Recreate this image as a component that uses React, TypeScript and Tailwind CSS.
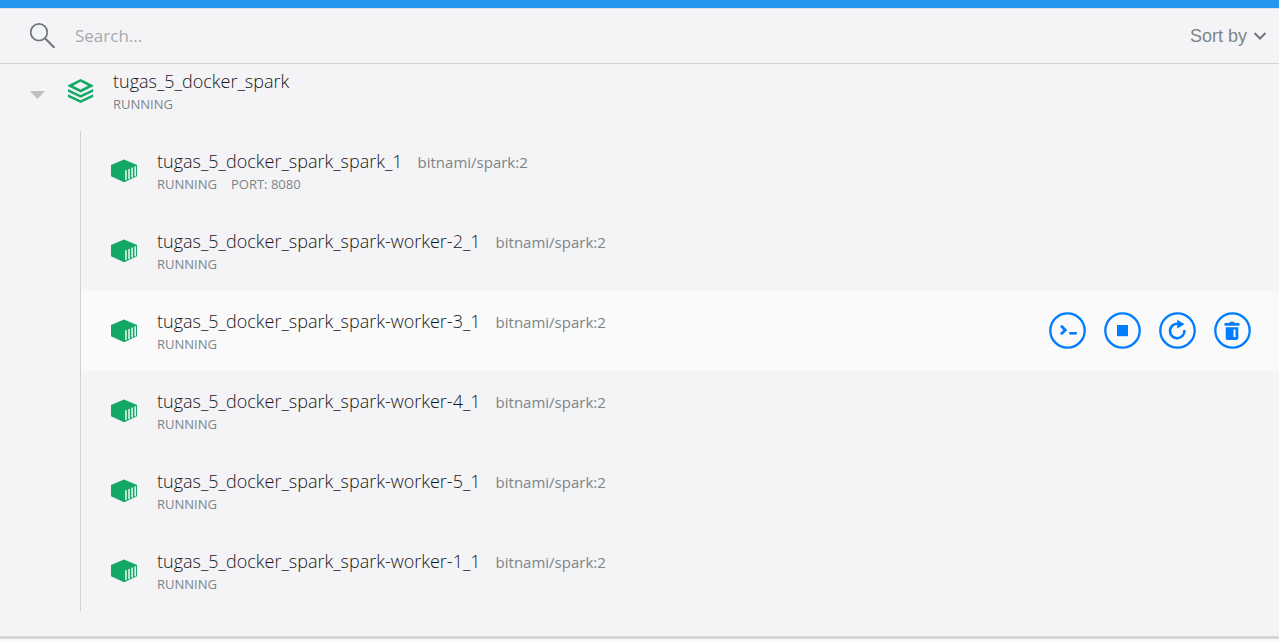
import type { ReactNode } from 'react';

type Container = { name: string; image: string; port?: number; active?: boolean };

const containers: Container[] = [
  { name: 'tugas_5_docker_spark_spark_1', image: 'bitnami/spark:2', port: 8080 },
  { name: 'tugas_5_docker_spark_spark-worker-2_1', image: 'bitnami/spark:2' },
  { name: 'tugas_5_docker_spark_spark-worker-3_1', image: 'bitnami/spark:2', active: true },
  { name: 'tugas_5_docker_spark_spark-worker-4_1', image: 'bitnami/spark:2' },
  { name: 'tugas_5_docker_spark_spark-worker-5_1', image: 'bitnami/spark:2' },
  { name: 'tugas_5_docker_spark_spark-worker-1_1', image: 'bitnami/spark:2' },
];

function SearchIcon() {
  return (
    <svg className="size-[26px]" viewBox="0 0 26 26" fill="none" stroke="#6d767b" aria-hidden="true">
      <circle cx="9" cy="9.2" r="8.3" strokeWidth="1.7" />
      <path d="M15 15.2 24.4 24.8" strokeWidth="2" />
    </svg>
  );
}

function StackIcon() {
  return (
    <svg className="h-6 w-[26px] shrink-0" viewBox="0 0 26 24" fill="#13a866" aria-hidden="true">
      <path fillRule="evenodd" d="M12.6 0 25.2 6.3V7.3L12.6 13.5 0 7.3V6.3ZM12.6 2.8 5.2 6.8 12.6 10.6 20 6.8Z" />
      <path d="M0 10.1 12.6 16 25.2 10.1V12.8L12.6 18.7 0 12.8Z" />
      <path d="M0 15.3 12.6 21.2 25.2 15.3V18L12.6 23.9 0 18Z" />
    </svg>
  );
}

function ContainerIcon() {
  return (
    <svg className="h-6 w-[26px] shrink-0" viewBox="0 0 26 24" aria-hidden="true">
      <path d="M13 .6 26 6V17.3L13 23.2 0 17.3V6Z" fill="#13a866" />
      <path d="M14.9 11.2V21M18 9.9V19.9M21.1 8.6V18.6M24.2 7.3V17.2" stroke="#f4f5f6" strokeWidth="1.5" />
    </svg>
  );
}

function ActionButton({ label, children }: { label: string; children: ReactNode }) {
  return (
    <button type="button" aria-label={label} className="size-[37px] text-[#007cff]">
      <svg viewBox="0 0 37 37" fill="none" className="size-full" aria-hidden="true">
        <circle cx="18.5" cy="18.5" r="17.2" stroke="currentColor" strokeWidth="2.3" />
        {children}
      </svg>
    </button>
  );
}

function Actions() {
  return (
    <div className="flex gap-[18px] pr-7 pb-px">
      <ActionButton label="Open terminal">
        <path d="M12 13.8 16.3 18 12 22.2" stroke="currentColor" strokeWidth="2.8" />
        <path d="M20.3 20H27.8V22.6H20.3Z" fill="currentColor" />
      </ActionButton>
      <ActionButton label="Stop">
        <path d="M13 13H24V24.2H13Z" fill="currentColor" />
      </ActionButton>
      <ActionButton label="Restart">
        <path d="M25.3 18A7.2 7.2 0 1 1 18.2 11.8H19" stroke="currentColor" strokeWidth="2.6" />
        <path d="M18.2 7.8 25.5 12.2 18.2 16.6Z" fill="currentColor" />
      </ActionButton>
      <ActionButton label="Delete">
        <path d="M10.5 11H15.3L16.1 9.8H19.9L20.7 11H25.5V13.8H10.5Z" fill="currentColor" />
        <path
          fillRule="evenodd"
          d="M11.7 15.3H24.3V26.2Q24.3 28 22.5 28H13.5Q11.7 28 11.7 26.2ZM19.5 17.5V25H21.5V17.5Z"
          fill="currentColor"
        />
      </ActionButton>
    </div>
  );
}

function ContainerRow({ name, image, port, active }: Container) {
  return (
    <li className={`flex h-20 items-center pl-[30px] ${active ? 'bg-[#fafafa]' : ''}`}>
      <ContainerIcon />
      <div className="ml-5 grow">
        <h2 className="flex items-baseline gap-[15px] text-lg leading-6 font-light text-[#14171a]">
          {name}
          <span className="text-[15px] font-normal text-[#7b8589]">{image}</span>
        </h2>
        <p className="flex gap-[14px] text-[13px] leading-5 text-[#7b8589]">
          <span>RUNNING</span>
          {port && <span>PORT: {port}</span>}
        </p>
      </div>
      {active && <Actions />}
    </li>
  );
}

export default function App() {
  return (
    <div className="flex min-h-screen flex-col bg-[#fafafa] font-['Open_Sans',sans-serif]">
      <div className="h-2 bg-[#2496ed]" />
      <header className="flex h-14 items-center border-t border-b border-t-[#dde1e5] border-b-[#d4d5d7] bg-[#f4f4f6] pr-3 pl-[30px]">
        <label htmlFor="search" aria-label="Search">
          <SearchIcon />
        </label>
        <input
          id="search"
          type="text"
          placeholder="Search..."
          className="ml-[19px] min-w-0 grow bg-transparent text-[17px] outline-none placeholder:text-[#a6aaad]"
        />
        <button type="button" className="flex items-center gap-[6px] pb-px font-['Liberation_Sans',sans-serif] text-lg leading-6 text-[#7b8589]">
          Sort by
          <svg className="h-2 w-[14px]" viewBox="0 0 14 8" fill="none" aria-hidden="true">
            <path d="M1.5 1 7 6.5 12.5 1" stroke="#6d767b" strokeWidth="2" />
          </svg>
        </button>
      </header>
      <main className="grow border-b-[3px] border-[#d5d5d6] bg-[#f4f4f6] pb-[25px]">
        <div className="flex h-[67px] items-start pt-[5px] pl-[30px]">
          <button type="button" aria-label="Collapse group" className="mt-[22px]">
            <svg className="h-2 w-[15px]" viewBox="0 0 15 8" aria-hidden="true">
              <path d="M0 0H15L7.5 8Z" fill="#bfc0c2" />
            </svg>
          </button>
          <div className="mt-[10px] ml-[23px]">
            <StackIcon />
          </div>
          <div className="ml-[19px]">
            <h1 className="text-lg leading-6 font-light text-[#14171a]">tugas_5_docker_spark</h1>
            <p className="text-[13px] leading-[22px] text-[#7b8589]">RUNNING</p>
          </div>
        </div>
        <ul className="ml-20 border-l border-[#d0d2d4]">
          {containers.map((container) => (
            <ContainerRow key={container.name} {...container} />
          ))}
        </ul>
      </main>
      <div className="h-[3px]" />
    </div>
  );
}
